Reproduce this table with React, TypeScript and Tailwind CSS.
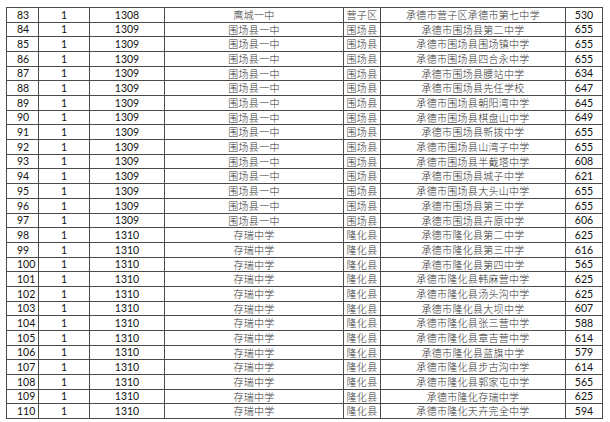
import React from "react";

type Row = [string, string, string, string, string, string, string];

const rows: Row[] = [
  ["83", "1", "1308", "鹰城一中", "营子区", "承德市营子区承德市第七中学", "530"],
  ["84", "1", "1309", "围场县一中", "围场县", "承德市围场县第二中学", "655"],
  ["85", "1", "1309", "围场县一中", "围场县", "承德市围场县围场镇中学", "655"],
  ["86", "1", "1309", "围场县一中", "围场县", "承德市围场县四合永中学", "655"],
  ["87", "1", "1309", "围场县一中", "围场县", "承德市围场县腰站中学", "634"],
  ["88", "1", "1309", "围场县一中", "围场县", "承德市围场县先任学校", "647"],
  ["89", "1", "1309", "围场县一中", "围场县", "承德市围场县朝阳湾中学", "645"],
  ["90", "1", "1309", "围场县一中", "围场县", "承德市围场县棋盘山中学", "649"],
  ["91", "1", "1309", "围场县一中", "围场县", "承德市围场县新拨中学", "655"],
  ["92", "1", "1309", "围场县一中", "围场县", "承德市围场县山湾子中学", "655"],
  ["93", "1", "1309", "围场县一中", "围场县", "承德市围场县半截塔中学", "608"],
  ["94", "1", "1309", "围场县一中", "围场县", "承德市围场县城子中学", "621"],
  ["95", "1", "1309", "围场县一中", "围场县", "承德市围场县大头山中学", "655"],
  ["96", "1", "1309", "围场县一中", "围场县", "承德市围场县第三中学", "655"],
  ["97", "1", "1309", "围场县一中", "围场县", "承德市围场县卉原中学", "606"],
  ["98", "1", "1310", "存瑞中学", "隆化县", "承德市隆化县第二中学", "625"],
  ["99", "1", "1310", "存瑞中学", "隆化县", "承德市隆化县第三中学", "616"],
  ["100", "1", "1310", "存瑞中学", "隆化县", "承德市隆化县第四中学", "565"],
  ["101", "1", "1310", "存瑞中学", "隆化县", "承德市隆化县韩麻营中学", "625"],
  ["102", "1", "1310", "存瑞中学", "隆化县", "承德市隆化县汤头沟中学", "625"],
  ["103", "1", "1310", "存瑞中学", "隆化县", "承德市隆化县大坝中学", "607"],
  ["104", "1", "1310", "存瑞中学", "隆化县", "承德市隆化县张三营中学", "588"],
  ["105", "1", "1310", "存瑞中学", "隆化县", "承德市隆化县章吉营中学", "614"],
  ["106", "1", "1310", "存瑞中学", "隆化县", "承德市隆化县蓝旗中学", "579"],
  ["107", "1", "1310", "存瑞中学", "隆化县", "承德市隆化县步古沟中学", "614"],
  ["108", "1", "1310", "存瑞中学", "隆化县", "承德市隆化县郭家屯中学", "565"],
  ["109", "1", "1310", "存瑞中学", "隆化县", "承德市隆化存瑞中学", "625"],
  ["110", "1", "1310", "存瑞中学", "隆化县", "承德市隆化天卉完全中学", "594"],
];

const num = "font-['Lato','Liberation_Sans',sans-serif] text-[10.5px] text-[#111]";
const cjk = "font-['Noto_Sans_CJK_SC',sans-serif] font-light text-[10px] tracking-[0.3px] text-[#333]";
const cell = "flex items-center border-r border-b border-[#4a4a4a] leading-none overflow-hidden whitespace-nowrap";

export default function App() {
  const step = 14.68;
  return (
    <div className="w-[610px] h-[422px] bg-white pt-[7px] pl-[6px]">
      <div className="grid grid-cols-[32px_51px_75px_179px_37px_185px_37px] w-fit border-l border-t border-[#4a4a4a]">
        {rows.map((r, i) => {
          const tall = Math.round((i + 1) * step) - Math.round(i * step) > 14;
          const h = tall ? "h-[15px]" : "h-[14px]";
          return (
            <React.Fragment key={r[0]}>
              <div className={`${cell} ${h} ${num} pl-[10px]`}>{r[0]}</div>
              <div className={`${cell} ${h} ${num} justify-center`}>{r[1]}</div>
              <div className={`${cell} ${h} ${num} justify-center`}>{r[2]}</div>
              <div className={`${cell} ${h} ${cjk} justify-center`}>{r[3]}</div>
              <div className={`${cell} ${h} ${cjk} justify-center`}>{r[4]}</div>
              <div className={`${cell} ${h} ${cjk} justify-center`}>{r[5]}</div>
              <div className={`${cell} ${h} ${num} justify-center`}>{r[6]}</div>
            </React.Fragment>
          );
        })}
      </div>
    </div>
  );
}
